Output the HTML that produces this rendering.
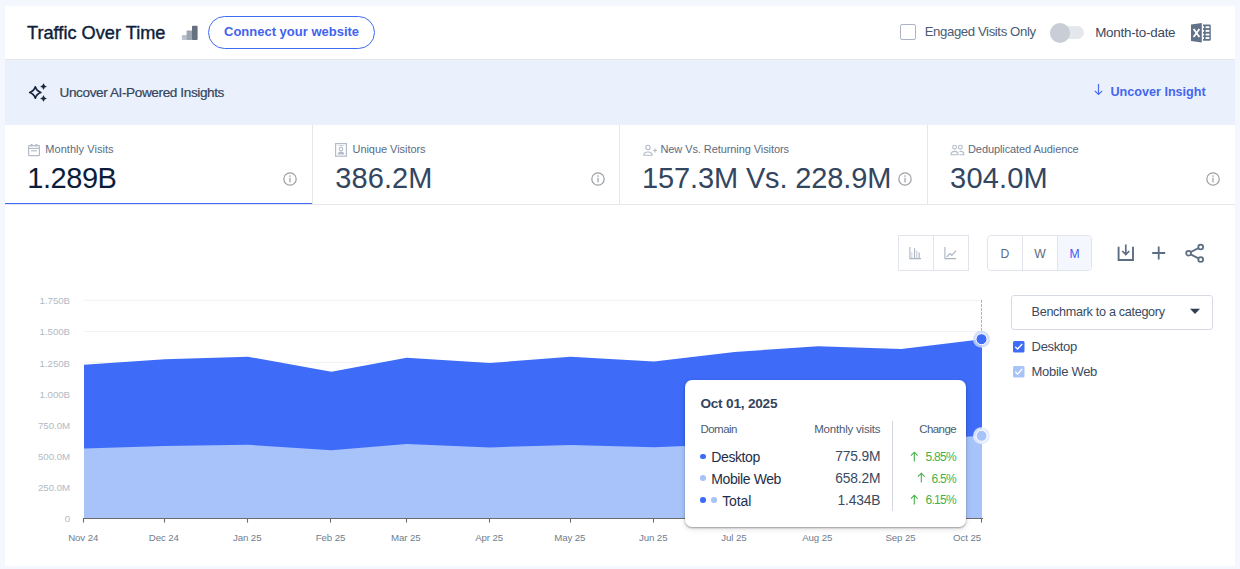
<!DOCTYPE html>
<html><head><meta charset="utf-8"><title>Traffic Over Time</title>
<style>
html,body{margin:0;padding:0;}
body{width:1240px;height:569px;overflow:hidden;background:#f4f7fd;position:relative;font-family:"Liberation Sans", sans-serif;}
.t{position:absolute;white-space:nowrap;}
.r{position:absolute;box-sizing:border-box;}
svg{position:absolute;overflow:visible;}
</style></head><body>
<div class="r" style="left:5px;top:6px;width:1230px;height:560px;background:#fff;"></div>
<div class="r" style="left:5px;top:59px;width:1230px;height:1px;background:#e3e6ea;"></div>
<div class="t" style="left:27px;top:23.59px;font-size:18.2px;line-height:18.2px;color:#0e1e3a;-webkit-text-stroke:0.4px #0e1e3a;">Traffic Over Time</div>
<svg style="left:181px;top:25px" width="18" height="16" viewBox="0 0 18 16"><rect x="0.8" y="10" width="6" height="5" rx="0.8" fill="#bcc3cc"/><rect x="5.6" y="5.4" width="5.6" height="9.6" rx="0.8" fill="#9ea6b2"/><rect x="11" y="0.8" width="5.6" height="14.2" rx="0.8" fill="#667080"/></svg>
<div class="r" style="left:208px;top:16px;width:167px;height:33px;border:1px solid #3f6cf2;border-radius:17px;"></div>
<div class="t" style="left:224px;top:25.00px;font-size:13px;line-height:13px;color:#4262ee;font-weight:700;">Connect your website</div>
<div class="r" style="left:900px;top:24px;width:16px;height:16px;border:1.8px solid #abb4c2;border-radius:2px;"></div>
<div class="t" style="left:924.7px;top:25.03px;font-size:13.2px;line-height:13.2px;color:#4b5b71;letter-spacing:-0.4px;">Engaged Visits Only</div>
<div class="r" style="left:1050px;top:26px;width:34px;height:13px;background:#e4e7ec;border-radius:7px;"></div>
<div class="r" style="left:1050px;top:23px;width:20px;height:20px;border-radius:50%;background:#c9ced6;"></div>
<div class="t" style="left:1095.2px;top:26.16px;font-size:13.4px;line-height:13.4px;color:#3a4a62;letter-spacing:-0.25px;">Month-to-date</div>
<svg style="left:1190px;top:22px" width="22" height="22" viewBox="0 0 22 22"><path d="M1 2.6 L11.8 1 L11.8 20.5 L1 18.9 Z" fill="#627389"/><path d="M3.6 6.9 L9.4 15 M9.4 6.9 L3.6 15" stroke="#fff" stroke-width="1.8"/><path d="M13 2.6 L19.6 2.6 Q20.8 2.6 20.8 3.8 L20.8 17.5 Q20.8 18.7 19.6 18.7 L13 18.7 Z" fill="#627389"/><rect x="15.6" y="4.25" width="3.8" height="1.9" fill="#fff"/><rect x="13" y="4.25" width="1" height="1.9" fill="#fff"/><rect x="15.6" y="7.95" width="3.8" height="1.9" fill="#fff"/><rect x="13" y="7.95" width="1" height="1.9" fill="#fff"/><rect x="15.6" y="11.65" width="3.8" height="1.9" fill="#fff"/><rect x="13" y="11.65" width="1" height="1.9" fill="#fff"/><rect x="15.6" y="15.05" width="3.8" height="1.9" fill="#fff"/><rect x="13" y="15.05" width="1" height="1.9" fill="#fff"/></svg>
<div class="r" style="left:5px;top:60px;width:1230px;height:65px;background:#ebf1fc;"></div>
<svg style="left:28px;top:83px" width="20" height="20" viewBox="0 0 20 20"><path d="M7.3 3.8 Q8.644 8.132 12.899999999999999 9.5 Q8.644 10.868 7.3 15.2 Q5.9559999999999995 10.868 1.7000000000000002 9.5 Q5.9559999999999995 8.132 7.3 3.8 Z" fill="none" stroke="#14233c" stroke-width="1.7" stroke-linejoin="round"/><path d="M15.5 0.6000000000000001 Q16.1 3.0 18.5 3.6 Q16.1 4.2 15.5 6.6 Q14.9 4.2 12.5 3.6 Q14.9 3.0 15.5 0.6000000000000001 Z" fill="#14233c" stroke="#14233c" stroke-width="0.3"/><path d="M15.5 12.5 Q16.1 14.9 18.5 15.5 Q16.1 16.1 15.5 18.5 Q14.9 16.1 12.5 15.5 Q14.9 14.9 15.5 12.5 Z" fill="#14233c" stroke="#14233c" stroke-width="0.3"/></svg>
<div class="t" style="left:59.5px;top:85.69px;font-size:13.6px;line-height:13.6px;color:#33445c;letter-spacing:-0.4px;-webkit-text-stroke:0.2px #33445c;">Uncover AI-Powered Insights</div>
<svg style="left:1093px;top:82.6px" width="12" height="13" viewBox="0 0 12 13"><path d="M5.5 1 L5.5 11.5 M1.8 7.8 L5.5 11.5 L9.2 7.8" fill="none" stroke="#4a6cf0" stroke-width="1.2"/></svg>
<div class="t" style="left:1110.5px;top:85.83px;font-size:12.6px;line-height:12.6px;color:#4466f0;font-weight:700;">Uncover Insight</div>
<div class="r" style="left:312px;top:125px;width:1px;height:79px;background:#e3e6ea;"></div>
<div class="r" style="left:619px;top:125px;width:1px;height:79px;background:#e3e6ea;"></div>
<div class="r" style="left:927px;top:125px;width:1px;height:79px;background:#e3e6ea;"></div>
<div class="r" style="left:5px;top:204px;width:1230px;height:1px;background:#e3e6ea;"></div>
<div class="r" style="left:5px;top:203px;width:307px;height:1px;background:#3a6af6;"></div>
<svg style="left:27px;top:143px" width="14" height="14" viewBox="0 0 14 14"><rect x="1.6" y="2.6" width="10.8" height="10" rx="0.6" fill="none" stroke="#b3bcc8" stroke-width="1.2"/><line x1="1.6" y1="5.4" x2="12.4" y2="5.4" stroke="#b3bcc8" stroke-width="1.2"/><rect x="3.6" y="1" width="2" height="2.4" fill="#b3bcc8"/><rect x="8.4" y="1" width="2" height="2.4" fill="#b3bcc8"/><line x1="4" y1="7.8" x2="10" y2="7.8" stroke="#b3bcc8" stroke-width="1.2"/></svg>
<div class="t" style="left:45.3px;top:143.59px;font-size:11px;line-height:11px;color:#5b6b80;letter-spacing:0.05px;">Monthly Visits</div>
<div class="t" style="left:27.3px;top:164.25px;font-size:29px;line-height:29px;color:#0c1d3b;letter-spacing:-0.46px;">1.289B</div>
<svg style="left:334px;top:142px" width="14" height="16" viewBox="0 0 14 16"><rect x="1.6" y="1.6" width="10.8" height="12.6" fill="none" stroke="#b3bcc8" stroke-width="1.2"/><circle cx="7" cy="7" r="1.8" fill="none" stroke="#b3bcc8" stroke-width="1.1"/><path d="M3.6 12.6 Q3.8 9.6 7 9.6 Q10.2 9.6 10.4 12.6 Z" fill="#b3bcc8"/><line x1="4.5" y1="3.6" x2="9.5" y2="3.6" stroke="#b3bcc8" stroke-width="0.8"/></svg>
<div class="t" style="left:352.5px;top:143.59px;font-size:11px;line-height:11px;color:#5b6b80;letter-spacing:-0.05px;">Unique Visitors</div>
<div class="t" style="left:335.2px;top:164.25px;font-size:29px;line-height:29px;color:#33465f;letter-spacing:0.12px;">386.2M</div>
<svg style="left:642px;top:143px" width="16" height="14" viewBox="0 0 16 14"><circle cx="6" cy="4.4" r="2.2" fill="none" stroke="#b3bcc8" stroke-width="1.1"/><path d="M1.8 12.2 Q1.8 9 6 9 Q10.2 9 10.2 12.2 Z" fill="none" stroke="#b3bcc8" stroke-width="1.1" stroke-linejoin="round"/><path d="M11 7.5 H15 M13 5.5 V9.5" stroke="#b3bcc8" stroke-width="1.2"/></svg>
<div class="t" style="left:660.4px;top:143.59px;font-size:11px;line-height:11px;color:#5b6b80;letter-spacing:-0.08px;">New Vs. Returning Visitors</div>
<div class="t" style="left:642px;top:164.25px;font-size:29px;line-height:29px;color:#33465f;letter-spacing:-0.13px;">157.3M Vs. 228.9M</div>
<svg style="left:950px;top:143px" width="15" height="14" viewBox="0 0 15 14"><circle cx="4.6" cy="4.2" r="1.9" fill="none" stroke="#b3bcc8" stroke-width="1.1"/><circle cx="10.4" cy="4.2" r="1.9" fill="none" stroke="#b3bcc8" stroke-width="1.1"/><path d="M1 11.8 Q1 8.4 4.6 8.4 Q8.2 8.4 8.2 11.8 Z" fill="none" stroke="#b3bcc8" stroke-width="1.1" stroke-linejoin="round"/><path d="M9.4 8.5 Q10 8.4 10.4 8.4 Q14 8.4 14 11.8 L9.5 11.8" fill="none" stroke="#b3bcc8" stroke-width="1.1" stroke-linejoin="round"/></svg>
<div class="t" style="left:968px;top:143.59px;font-size:11px;line-height:11px;color:#5b6b80;letter-spacing:-0.09px;">Deduplicated Audience</div>
<div class="t" style="left:950.1px;top:164.25px;font-size:29px;line-height:29px;color:#33465f;letter-spacing:0.18px;">304.0M</div>
<svg style="left:282px;top:171px" width="16" height="16" viewBox="0 0 16 16"><circle cx="8" cy="8" r="6.2" fill="none" stroke="#9c9fa4" stroke-width="1.2"/><circle cx="8" cy="5.1" r="0.8" fill="#9c9fa4"/><rect x="7.4" y="6.8" width="1.2" height="4.6" fill="#9c9fa4"/></svg>
<svg style="left:590px;top:171px" width="16" height="16" viewBox="0 0 16 16"><circle cx="8" cy="8" r="6.2" fill="none" stroke="#9c9fa4" stroke-width="1.2"/><circle cx="8" cy="5.1" r="0.8" fill="#9c9fa4"/><rect x="7.4" y="6.8" width="1.2" height="4.6" fill="#9c9fa4"/></svg>
<svg style="left:897px;top:171px" width="16" height="16" viewBox="0 0 16 16"><circle cx="8" cy="8" r="6.2" fill="none" stroke="#9c9fa4" stroke-width="1.2"/><circle cx="8" cy="5.1" r="0.8" fill="#9c9fa4"/><rect x="7.4" y="6.8" width="1.2" height="4.6" fill="#9c9fa4"/></svg>
<svg style="left:1205px;top:171px" width="16" height="16" viewBox="0 0 16 16"><circle cx="8" cy="8" r="6.2" fill="none" stroke="#9c9fa4" stroke-width="1.2"/><circle cx="8" cy="5.1" r="0.8" fill="#9c9fa4"/><rect x="7.4" y="6.8" width="1.2" height="4.6" fill="#9c9fa4"/></svg>
<div class="r" style="left:898px;top:235px;width:71px;height:36px;border:1px solid #e1e5eb;"></div>
<div class="r" style="left:933px;top:235px;width:1px;height:36px;background:#e1e5eb;"></div>
<svg style="left:905px;top:244px" width="20" height="18" viewBox="0 0 20 18"><path d="M4.9 3 V14.6 H16" fill="none" stroke="#aab4c3" stroke-width="1.1"/><rect x="6.2" y="8" width="1.2" height="6" fill="#d3d9e1"/><rect x="9" y="4.2" width="1.1" height="9.8" fill="#aab4c3"/><rect x="11.2" y="6.6" width="1.2" height="7.4" fill="#c6cdd7"/><rect x="13.6" y="8.4" width="1.1" height="5.6" fill="#aab4c3"/></svg>
<svg style="left:940px;top:244px" width="20" height="18" viewBox="0 0 20 18"><path d="M4.9 3 V14.6 H16" fill="none" stroke="#aab4c3" stroke-width="1.1"/><path d="M6.6 13 L9.9 9.6 L11.8 11.4 L16 6.6" fill="none" stroke="#aab4c3" stroke-width="1.1"/></svg>
<div class="r" style="left:987px;top:235px;width:105px;height:36px;border:1px solid #e1e5eb;border-radius:4px;"></div>
<div class="r" style="left:1022px;top:236px;width:1px;height:34px;background:#e1e5eb;"></div>
<div class="r" style="left:1057px;top:236px;width:1px;height:34px;background:#e1e5eb;"></div>
<div class="r" style="left:1058px;top:236px;width:33px;height:34px;background:#f4f7fd;border-radius:0 3px 3px 0;"></div>
<div class="t" style="left:805px;width:400px;text-align:center;top:248.17px;font-size:12.2px;line-height:12.2px;color:#5b6b80;">D</div>
<div class="t" style="left:840px;width:400px;text-align:center;top:248.17px;font-size:12.2px;line-height:12.2px;color:#5b6b80;">W</div>
<div class="t" style="left:874.5px;width:400px;text-align:center;top:248.17px;font-size:12.2px;line-height:12.2px;color:#4a5cf0;">M</div>
<svg style="left:1116px;top:243px" width="20" height="20" viewBox="0 0 20 20"><path d="M2.6 3.8 V17 H17 V3.8" fill="none" stroke="#5d6d82" stroke-width="1.9"/><path d="M9.8 1.5 V11.4 M6.3 8 L9.8 11.5 L13.3 8" fill="none" stroke="#5d6d82" stroke-width="1.7"/></svg>
<svg style="left:1150px;top:244px" width="18" height="18" viewBox="0 0 18 18"><path d="M8.7 2.5 V15.5 M2.2 9 H15.2" fill="none" stroke="#5d6d82" stroke-width="1.8"/></svg>
<svg style="left:1184px;top:242px" width="22" height="22" viewBox="0 0 22 22"><circle cx="4.6" cy="11.2" r="2.4" fill="none" stroke="#5d6d82" stroke-width="1.8"/><circle cx="16.7" cy="5" r="2.4" fill="none" stroke="#5d6d82" stroke-width="1.8"/><circle cx="16.7" cy="17.5" r="2.4" fill="none" stroke="#5d6d82" stroke-width="1.8"/><path d="M6.8 10 L14.5 6.1 M6.8 12.4 L14.5 16.4" stroke="#5d6d82" stroke-width="1.8"/></svg>
<svg style="left:0;top:0" width="1240" height="569" viewBox="0 0 1240 569"><line x1="84" y1="487.1" x2="982" y2="487.1" stroke="#f0f1f3" stroke-width="1"/><line x1="84" y1="455.9" x2="982" y2="455.9" stroke="#f0f1f3" stroke-width="1"/><line x1="84" y1="424.8" x2="982" y2="424.8" stroke="#f0f1f3" stroke-width="1"/><line x1="84" y1="393.7" x2="982" y2="393.7" stroke="#f0f1f3" stroke-width="1"/><line x1="84" y1="362.6" x2="982" y2="362.6" stroke="#f0f1f3" stroke-width="1"/><line x1="84" y1="331.4" x2="982" y2="331.4" stroke="#f0f1f3" stroke-width="1"/><line x1="84" y1="300.3" x2="982" y2="300.3" stroke="#f0f1f3" stroke-width="1"/><line x1="981.5" y1="300" x2="981.5" y2="518" stroke="#b3b3b3" stroke-width="1" stroke-dasharray="3,1"/><polygon points="84.0,518.2 84.0,364.7 164.7,359.3 248.0,356.8 331.4,371.7 406.6,357.8 490.0,363.0 570.6,356.8 654.0,361.4 734.6,352.0 818.0,346.2 901.3,348.9 982.0,339.2 982.0,518.2" fill="#3e6cf8"/><polygon points="84.0,518.2 84.0,448.6 164.7,445.9 248.0,444.8 331.4,450.3 406.6,443.9 490.0,447.4 570.6,445.0 654.0,447.2 734.6,444.0 818.0,441.5 901.3,440.5 982.0,435.8 982.0,518.2" fill="#a7c3fa"/><line x1="83" y1="518.5" x2="983" y2="518.5" stroke="#6e6a6a" stroke-width="1"/><line x1="83.5" y1="518" x2="83.5" y2="522.6" stroke="#6e6a6a" stroke-width="1.1"/><line x1="164.5" y1="518" x2="164.5" y2="522.6" stroke="#6e6a6a" stroke-width="1.1"/><line x1="247.5" y1="518" x2="247.5" y2="522.6" stroke="#6e6a6a" stroke-width="1.1"/><line x1="330.5" y1="518" x2="330.5" y2="522.6" stroke="#6e6a6a" stroke-width="1.1"/><line x1="406.5" y1="518" x2="406.5" y2="522.6" stroke="#6e6a6a" stroke-width="1.1"/><line x1="489.5" y1="518" x2="489.5" y2="522.6" stroke="#6e6a6a" stroke-width="1.1"/><line x1="570.5" y1="518" x2="570.5" y2="522.6" stroke="#6e6a6a" stroke-width="1.1"/><line x1="653.5" y1="518" x2="653.5" y2="522.6" stroke="#6e6a6a" stroke-width="1.1"/><line x1="734.5" y1="518" x2="734.5" y2="522.6" stroke="#6e6a6a" stroke-width="1.1"/><line x1="817.5" y1="518" x2="817.5" y2="522.6" stroke="#6e6a6a" stroke-width="1.1"/><line x1="900.5" y1="518" x2="900.5" y2="522.6" stroke="#6e6a6a" stroke-width="1.1"/><line x1="981.5" y1="518" x2="981.5" y2="522.6" stroke="#6e6a6a" stroke-width="1.1"/><circle cx="981.5" cy="339.2" r="8.5" fill="#c9d7fb" fill-opacity="0.8"/><circle cx="981.5" cy="339.2" r="5.5" fill="#3e6cf8" stroke="#fff" stroke-width="1"/><circle cx="981.5" cy="435.8" r="8.5" fill="#e3ebfd" fill-opacity="0.9"/><circle cx="981.5" cy="435.8" r="5.5" fill="#a7c3fa" stroke="#fff" stroke-width="1"/></svg>
<div class="t" style="right:1170px;top:514.19px;font-size:9.7px;line-height:9.7px;color:#b2bac6;letter-spacing:-0.05px;">0</div>
<div class="t" style="right:1170px;top:483.06px;font-size:9.7px;line-height:9.7px;color:#b2bac6;letter-spacing:-0.05px;">250.0M</div>
<div class="t" style="right:1170px;top:451.93px;font-size:9.7px;line-height:9.7px;color:#b2bac6;letter-spacing:-0.05px;">500.0M</div>
<div class="t" style="right:1170px;top:420.80px;font-size:9.7px;line-height:9.7px;color:#b2bac6;letter-spacing:-0.05px;">750.0M</div>
<div class="t" style="right:1170px;top:389.67px;font-size:9.7px;line-height:9.7px;color:#b2bac6;letter-spacing:-0.05px;">1.000B</div>
<div class="t" style="right:1170px;top:358.55px;font-size:9.7px;line-height:9.7px;color:#b2bac6;letter-spacing:-0.05px;">1.250B</div>
<div class="t" style="right:1170px;top:327.42px;font-size:9.7px;line-height:9.7px;color:#b2bac6;letter-spacing:-0.05px;">1.500B</div>
<div class="t" style="right:1170px;top:296.29px;font-size:9.7px;line-height:9.7px;color:#b2bac6;letter-spacing:-0.05px;">1.750B</div>
<div class="t" style="left:-116.8px;width:400px;text-align:center;top:532.69px;font-size:9.7px;line-height:9.7px;color:#707d8e;letter-spacing:-0.1px;">Nov 24</div>
<div class="t" style="left:-36.14131736526946px;width:400px;text-align:center;top:532.69px;font-size:9.7px;line-height:9.7px;color:#707d8e;letter-spacing:-0.1px;">Dec 24</div>
<div class="t" style="left:47.205988023952074px;width:400px;text-align:center;top:532.69px;font-size:9.7px;line-height:9.7px;color:#707d8e;letter-spacing:-0.1px;">Jan 25</div>
<div class="t" style="left:130.55329341317366px;width:400px;text-align:center;top:532.69px;font-size:9.7px;line-height:9.7px;color:#707d8e;letter-spacing:-0.1px;">Feb 25</div>
<div class="t" style="left:205.83473053892214px;width:400px;text-align:center;top:532.69px;font-size:9.7px;line-height:9.7px;color:#707d8e;letter-spacing:-0.1px;">Mar 25</div>
<div class="t" style="left:289.1820359281437px;width:400px;text-align:center;top:532.69px;font-size:9.7px;line-height:9.7px;color:#707d8e;letter-spacing:-0.1px;">Apr 25</div>
<div class="t" style="left:369.8407185628744px;width:400px;text-align:center;top:532.69px;font-size:9.7px;line-height:9.7px;color:#707d8e;letter-spacing:-0.1px;">May 25</div>
<div class="t" style="left:453.1880239520958px;width:400px;text-align:center;top:532.69px;font-size:9.7px;line-height:9.7px;color:#707d8e;letter-spacing:-0.1px;">Jun 25</div>
<div class="t" style="left:533.8467065868264px;width:400px;text-align:center;top:532.69px;font-size:9.7px;line-height:9.7px;color:#707d8e;letter-spacing:-0.1px;">Jul 25</div>
<div class="t" style="left:617.1940119760479px;width:400px;text-align:center;top:532.69px;font-size:9.7px;line-height:9.7px;color:#707d8e;letter-spacing:-0.1px;">Aug 25</div>
<div class="t" style="left:700.5413173652695px;width:400px;text-align:center;top:532.69px;font-size:9.7px;line-height:9.7px;color:#707d8e;letter-spacing:-0.1px;">Sep 25</div>
<div class="t" style="right:259px;top:532.69px;font-size:9.7px;line-height:9.7px;color:#707d8e;letter-spacing:-0.1px;">Oct 25</div>
<div class="r" style="left:1011px;top:295px;width:202px;height:35px;border:1px solid #d6dbe3;border-radius:3px;"></div>
<div class="t" style="left:1031.6px;top:305.73px;font-size:12.6px;line-height:12.6px;color:#3a4a62;letter-spacing:-0.3px;">Benchmark to a category</div>
<svg style="left:1189px;top:308px" width="12" height="7" viewBox="0 0 12 7"><path d="M1 0.8 H11 L6 6 Z" fill="#2f3e55"/></svg>
<svg style="left:1012.5px;top:340.5px" width="11.5" height="11.5" viewBox="0 0 11.5 11.5"><rect x="0" y="0" width="11.5" height="11.5" rx="1.5" fill="#3e6cf8"/><path d="M2.2 5.8 L4.6 8 L9.2 3" fill="none" stroke="#fff" stroke-width="1.3"/></svg>
<svg style="left:1012.5px;top:365.5px" width="11.5" height="11.5" viewBox="0 0 11.5 11.5"><rect x="0" y="0" width="11.5" height="11.5" rx="1.5" fill="#a7c3fa"/><path d="M2.2 5.8 L4.6 8 L9.2 3" fill="none" stroke="#fff" stroke-width="1.3"/></svg>
<div class="t" style="left:1031.6px;top:340.00px;font-size:13px;line-height:13px;color:#3a4a62;letter-spacing:-0.35px;">Desktop</div>
<div class="t" style="left:1031.6px;top:364.80px;font-size:13px;line-height:13px;color:#3a4a62;letter-spacing:-0.3px;">Mobile Web</div>
<div class="r" style="left:685px;top:380px;width:281px;height:147px;background:#fff;border-radius:7px;box-shadow:0 1px 2px rgba(0,0,0,0.35),0 2px 6px rgba(0,0,0,0.12);"></div>
<div class="t" style="left:700.4px;top:397.49px;font-size:13.6px;line-height:13.6px;color:#33445c;font-weight:700;letter-spacing:-0.2px;">Oct 01, 2025</div>
<div class="t" style="left:700.4px;top:423.77px;font-size:11.5px;line-height:11.5px;color:#4b5b71;letter-spacing:-0.5px;">Domain</div>
<div class="t" style="right:359.6px;top:423.77px;font-size:11.5px;line-height:11.5px;color:#4b5b71;letter-spacing:-0.2px;">Monthly visits</div>
<div class="t" style="right:284px;top:423.77px;font-size:11.5px;line-height:11.5px;color:#4b5b71;letter-spacing:-0.6px;">Change</div>
<div class="r" style="left:892px;top:421px;width:1px;height:90px;background:#d3d8df;"></div>
<div class="r" style="left:700.4px;top:453.5px;width:5.6px;height:5.6px;border-radius:50%;background:#3e6cf8"></div>
<div class="t" style="left:711.3px;top:450.15px;font-size:14px;line-height:14px;color:#1e2e48;letter-spacing:-0.4px;">Desktop</div>
<div class="t" style="right:359.6px;top:450.32px;font-size:13.8px;line-height:13.8px;color:#3a4a62;letter-spacing:-0.15px;">775.9M</div>
<div class="t" style="right:284px;top:450.64px;font-size:12px;line-height:12px;color:#43b14b;letter-spacing:-0.7px;">5.85%</div>
<div class="r" style="left:700.4px;top:475.4px;width:5.6px;height:5.6px;border-radius:50%;background:#a7c3fa"></div>
<div class="t" style="left:711.3px;top:472.05px;font-size:14px;line-height:14px;color:#1e2e48;letter-spacing:-0.4px;">Mobile Web</div>
<div class="t" style="right:359.6px;top:472.22px;font-size:13.8px;line-height:13.8px;color:#3a4a62;letter-spacing:-0.15px;">658.2M</div>
<div class="t" style="right:284px;top:472.54px;font-size:12px;line-height:12px;color:#43b14b;letter-spacing:-0.7px;">6.5%</div>
<div class="r" style="left:700.4px;top:497.2px;width:5.6px;height:5.6px;border-radius:50%;background:#3e6cf8"></div>
<div class="r" style="left:711px;top:497.2px;width:5.6px;height:5.6px;border-radius:50%;background:#a7c3fa"></div>
<div class="t" style="left:722.2px;top:493.85px;font-size:14px;line-height:14px;color:#1e2e48;letter-spacing:-0.1px;">Total</div>
<div class="t" style="right:359.6px;top:494.02px;font-size:13.8px;line-height:13.8px;color:#3a4a62;letter-spacing:-0.15px;">1.434B</div>
<div class="t" style="right:284px;top:494.34px;font-size:12px;line-height:12px;color:#43b14b;letter-spacing:-0.7px;">6.15%</div>
<svg style="left:910.4px;top:450.5px" width="9" height="11" viewBox="0 0 9 11"><path d="M4.3 10.5 V1.3 M1 4.6 L4.3 1.2 L7.6 4.6" fill="none" stroke="#43b14b" stroke-width="1.1"/></svg>
<svg style="left:917.2px;top:472.4px" width="9" height="11" viewBox="0 0 9 11"><path d="M4.3 10.5 V1.3 M1 4.6 L4.3 1.2 L7.6 4.6" fill="none" stroke="#43b14b" stroke-width="1.1"/></svg>
<svg style="left:910.4px;top:494.2px" width="9" height="11" viewBox="0 0 9 11"><path d="M4.3 10.5 V1.3 M1 4.6 L4.3 1.2 L7.6 4.6" fill="none" stroke="#43b14b" stroke-width="1.1"/></svg>
</body></html>
